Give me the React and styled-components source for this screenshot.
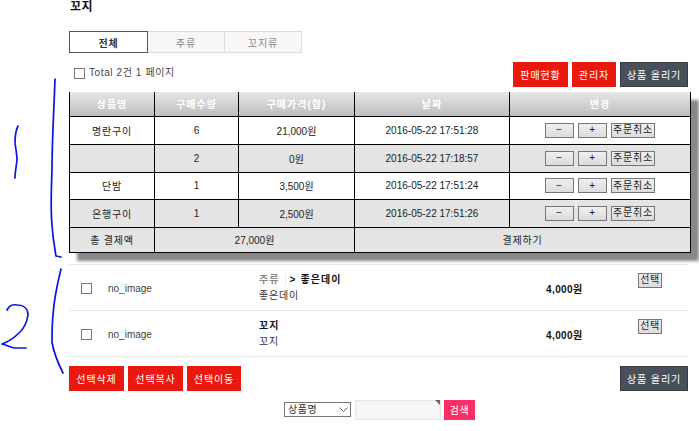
import React from "react";
import styled, { createGlobalStyle } from "styled-components";

const GlobalStyle = createGlobalStyle`
  html, body {
    margin: 0;
    padding: 0;
    background: #fff;
  }
  body {
    font-family: "Liberation Sans", "Noto Sans CJK KR", sans-serif;
    font-size: 10px;
    color: #222;
  }
  * {
    box-sizing: border-box;
  }
`;

const Page = styled.div`
  position: relative;
  width: 699px;
  height: 431px;
  overflow: hidden;
  padding-left: 69px;
`;

const Content = styled.div`
  width: 619px;
`;

const Title = styled.h1`
  margin: 0;
  height: 31px;
  padding-left: 1px;
  font-size: 12px;
  line-height: 14px;
  font-weight: 700;
  letter-spacing: 0.5px;
  color: #111;
`;

const Tabs = styled.div`
  display: flex;
  height: 22px;
`;

const Tab = styled.div`
  width: ${(p) => p.$w}px;
  display: flex;
  align-items: center;
  justify-content: center;
  margin-left: ${(p) => (p.$active ? 0 : -1)}px;
  border: 1px solid ${(p) => (p.$active ? "#555" : "#ddd")};
  background: ${(p) => (p.$active ? "#fff" : "#f7f7f7")};
  color: ${(p) => (p.$active ? "#333" : "#888")};
  font-weight: ${(p) => (p.$active ? 700 : 400)};
  position: ${(p) => (p.$active ? "relative" : "static")};
  letter-spacing: 0.9px;
`;

const TopBar = styled.div`
  display: flex;
  justify-content: space-between;
  align-items: flex-start;
  height: 39px;
  padding-top: 9px;
`;

const TotalLabel = styled.label`
  display: flex;
  align-items: center;
  gap: 4px;
  padding-left: 5px;
  margin-top: 5px;
  font-size: 10px;
  line-height: 12px;
  color: #444;
  letter-spacing: 0.6px;
`;

const CheckBox = styled.input.attrs({ type: "checkbox" })`
  appearance: none;
  display: block;
  margin: 0;
  width: 11px;
  height: 11px;
  border: 1px solid #777;
  background: #fff;
`;

const ButtonGroup = styled.div`
  display: flex;
  gap: 4px;
`;

const ActionButton = styled.button`
  height: 25px;
  width: ${(p) => p.$w}px;
  padding: 0;
  border: ${(p) => (p.$dark ? "1px solid #333a44" : "0")};
  background: ${(p) => (p.$dark ? "#4a505b" : "#e9190f")};
  color: #fff;
  font-family: inherit;
  font-size: 10px;
  letter-spacing: 0.9px;
`;

const OrderTable = styled.table`
  width: 621px;
  table-layout: fixed;
  border-collapse: collapse;
  box-shadow: 8px 8px 3px #888;
  text-align: center;
  font-size: 10px;
  color: #222;
`;

const HeadCell = styled.th`
  height: 24px;
  padding: 0;
  border-left: 1px solid #000;
  border-right: 1px solid #000;
  border-bottom: 1px solid #000;
  background: linear-gradient(#e6e6e6, #bebebe);
  color: #fff;
  font-size: 10px;
  font-weight: 700;
  letter-spacing: 1px;
`;

const Row = styled.tr`
  height: ${(p) => p.$h}px;
  background: ${(p) => (p.$shade ? "#e4e4e4" : "#fff")};
`;

const Cell = styled.td`
  padding: 0;
  border: 1px solid #000;
  letter-spacing: ${(p) => (p.$label ? "0.8px" : "0")};
`;

const SmallButtons = styled.div`
  display: flex;
  justify-content: center;
  gap: 4px;
`;

const SmallButton = styled.button`
  width: ${(p) => p.$w}px;
  height: 15px;
  padding: 0;
  border: 1px solid #777;
  background: linear-gradient(#efefef, #dcdcdc);
  color: #222;
  font-family: inherit;
  font-size: 10px;
  line-height: 12px;
  letter-spacing: 0.8px;
`;

const ProductList = styled.div`
  margin-top: 11px;
  border-top: 1px solid #e8e8e8;
`;

const ProductRow = styled.div`
  display: grid;
  grid-template-columns: 27px 151px 287px 92px 24px;
  height: 46px;
  padding: 2px 0 0 12px;
  align-items: center;
  border-bottom: 1px solid #e8e8e8;
`;

const NoImage = styled.div`
  color: #444;
`;

const ProductInfo = styled.div`
  display: flex;
  flex-direction: column;
  gap: 4px;
  line-height: 12px;
`;

const ProductName = styled.div`
  font-weight: 700;
  color: #111;
  letter-spacing: 1.1px;
`;

const Category = styled.span`
  display: inline-block;
  padding-right: 5px;
  margin-right: 4px;
  border-right: 1px solid #e8e8e8;
  color: #888;
`;

const ProductDesc = styled.div`
  color: #333;
  letter-spacing: 0.8px;
`;

const Price = styled.div`
  font-weight: 700;
  color: #111;
  letter-spacing: 0.4px;
`;

const PickButton = styled(SmallButton)`
  align-self: start;
  margin-top: 6px;
  letter-spacing: 0.5px;
`;

const BottomBar = styled.div`
  display: flex;
  justify-content: space-between;
  margin-top: 9px;
`;

const SearchBar = styled.div`
  display: flex;
  align-items: center;
  margin-top: 9px;
  padding-left: 215px;
`;

const SelectWrap = styled.div`
  position: relative;
  width: 67px;
  height: 15px;
  margin-right: 4px;
`;

const Select = styled.select`
  appearance: none;
  display: block;
  width: 100%;
  height: 100%;
  padding: 0 0 0 3px;
  border: 1px solid #777;
  border-radius: 0;
  background: #fff;
  color: #333;
  font-family: inherit;
  font-size: 10px;
  letter-spacing: 0.5px;
`;

const Chevron = styled.svg`
  position: absolute;
  right: 3px;
  top: 5px;
  pointer-events: none;
`;

const InputWrap = styled.div`
  position: relative;
  width: 86px;
  height: 20px;
  margin-right: 3px;
  &::after {
    content: "";
    position: absolute;
    top: 0;
    right: 1px;
    border-top: 5px solid #666;
    border-left: 5px solid transparent;
  }
`;

const SearchInput = styled.input`
  display: block;
  width: 100%;
  height: 100%;
  border: 1px solid #e6e6e6;
  background: #f6f6f6;
`;

const SearchButton = styled.button`
  width: 31px;
  height: 20px;
  padding: 0;
  border: 0;
  background: #fb2e68;
  color: #fff;
  font-family: inherit;
  font-size: 10px;
  letter-spacing: 0.5px;
`;

const Annotation = styled.svg`
  position: absolute;
  top: 0;
  left: 0;
  pointer-events: none;
`;

const orders = [
  { name: "명란구이", qty: 6, price: "21,000원", date: "2016-05-22 17:51:28", h: 28 },
  { name: "", qty: 2, price: "0원", date: "2016-05-22 17:18:57", h: 28, shade: true },
  { name: "단밤", qty: 1, price: "3,500원", date: "2016-05-22 17:51:24", h: 27 },
  { name: "은행구이", qty: 1, price: "2,500원", date: "2016-05-22 17:51:26", h: 28, shade: true },
];

const heads = ["상품명", "구매수량", "구매가격(합)", "날짜", "변경"];

const App = () => {
  return (
    <Page>
      <GlobalStyle />
      <Content>
        <Title>꼬지</Title>
        <Tabs>
          <Tab $active $w={79}>전체</Tab>
          <Tab $w={78}>주류</Tab>
          <Tab $w={78}>꼬지류</Tab>
        </Tabs>
        <TopBar>
          <TotalLabel>
            <CheckBox />
            Total 2건 1 페이지
          </TotalLabel>
          <ButtonGroup>
            <ActionButton $w={55}>판매현황</ActionButton>
            <ActionButton $w={44}>관리자</ActionButton>
            <ActionButton $w={68} $dark>상품 올리기</ActionButton>
          </ButtonGroup>
        </TopBar>
        <OrderTable>
          <colgroup>
            <col width="85" />
            <col width="84" />
            <col width="116" />
            <col width="155" />
            <col width="181" />
          </colgroup>
          <thead>
            <tr>
              {heads.map((h) => (
                <HeadCell key={h}>{h}</HeadCell>
              ))}
            </tr>
          </thead>
          <tbody>
            {orders.map((o) => (
              <Row key={o.date} $h={o.h} $shade={o.shade}>
                <Cell $label>{o.name}</Cell>
                <Cell>{o.qty}</Cell>
                <Cell>{o.price}</Cell>
                <Cell>{o.date}</Cell>
                <Cell>
                  <SmallButtons>
                    <SmallButton $w={29}>−</SmallButton>
                    <SmallButton $w={29}>+</SmallButton>
                    <SmallButton $w={44}>주문취소</SmallButton>
                  </SmallButtons>
                </Cell>
              </Row>
            ))}
            <Row $h={25} $shade>
              <Cell $label>총 결제액</Cell>
              <Cell colSpan={2}>27,000원</Cell>
              <Cell $label colSpan={2}>결제하기</Cell>
            </Row>
          </tbody>
        </OrderTable>
        <ProductList>
          <ProductRow>
            <CheckBox />
            <NoImage>no_image</NoImage>
            <ProductInfo>
              <ProductName>
                <Category>주류</Category>&gt; 좋은데이
              </ProductName>
              <ProductDesc>좋은데이</ProductDesc>
            </ProductInfo>
            <Price>4,000원</Price>
            <PickButton $w={24}>선택</PickButton>
          </ProductRow>
          <ProductRow>
            <CheckBox />
            <NoImage>no_image</NoImage>
            <ProductInfo>
              <ProductName>꼬지</ProductName>
              <ProductDesc>꼬지</ProductDesc>
            </ProductInfo>
            <Price>4,000원</Price>
            <PickButton $w={24}>선택</PickButton>
          </ProductRow>
        </ProductList>
        <BottomBar>
          <ButtonGroup>
            <ActionButton $w={55}>선택삭제</ActionButton>
            <ActionButton $w={55}>선택복사</ActionButton>
            <ActionButton $w={54}>선택이동</ActionButton>
          </ButtonGroup>
          <ActionButton $w={68} $dark>상품 올리기</ActionButton>
        </BottomBar>
        <SearchBar>
          <SelectWrap>
            <Select defaultValue="name">
              <option value="name">상품명</option>
            </Select>
            <Chevron width="9" height="5" viewBox="0 0 9 5">
              <path d="M0.5 0.5 L4.5 4.5 L8.5 0.5" fill="none" stroke="#666" />
            </Chevron>
          </SelectWrap>
          <InputWrap>
            <SearchInput />
          </InputWrap>
          <SearchButton>검색</SearchButton>
        </SearchBar>
      </Content>
      {/* hand drawn marks on top of the screenshot */}
      <Annotation width="699" height="431" viewBox="0 0 699 431" fill="none" stroke="#0a14e6" strokeWidth="1.7" strokeLinecap="round" strokeLinejoin="round">
        <path d="M55 79 C54 110 52 140 52 170 C51 195 51 215 52 225 C53 240 55 250 56 256 L61 257" />
        <path d="M18 126 C15 132 15 138 15 143 C16 150 17 155 17 160 C16 168 15 173 15 178" />
        <path d="M61 269 C57 285 54 300 53 315 C52 325 52 335 52 342 C54 355 59 365 63 373" />
        <path d="M7 310 C9 306 13 304 17 305 C24 305 28 309 28 315 C27 322 24 328 20 332 C15 337 8 342 2 344 C7 345 11 348 15 348 L26 348" />
      </Annotation>
    </Page>
  );
};

export default App;
